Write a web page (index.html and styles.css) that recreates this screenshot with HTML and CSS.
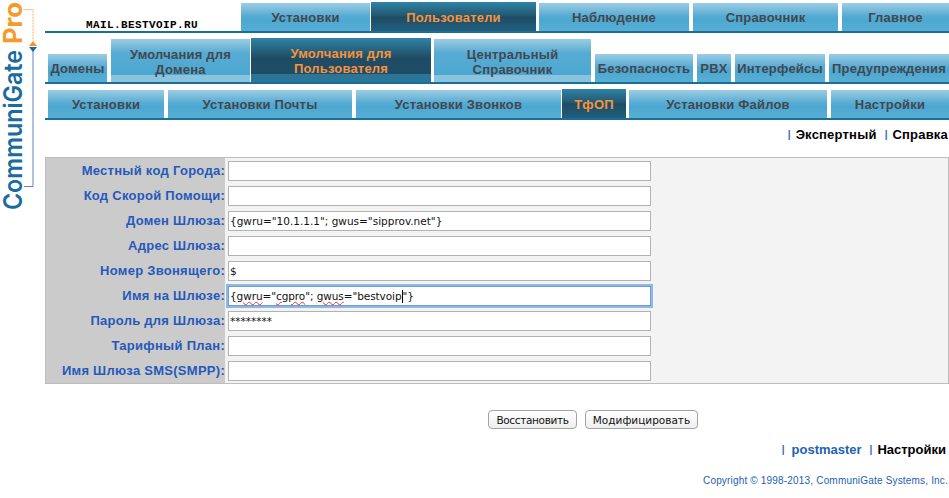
FILE: index.html
```html
<!DOCTYPE html>
<html lang="ru">
<head>
<meta charset="utf-8">
<title>CommuniGate Pro</title>
<link rel="stylesheet" href="styles.css">
</head>
<body>
<div class="page">
  <aside class="logo">
    <svg width="45" height="215" viewBox="0 0 45 215">
      <text class="logo-blue" transform="translate(22 210) rotate(-90)" textLength="160" lengthAdjust="spacingAndGlyphs">CommuniGate</text>
      <text class="logo-orange" transform="translate(22 44) rotate(-90)" textLength="42" lengthAdjust="spacingAndGlyphs">Pro</text>
      <path class="line-orange" d="M21 9.500H33V41"/>
      <path class="line-blue" d="M33 50V186.500H24"/>
      <path class="tri-orange" d="M29 46L33 41L37 46Z"/>
      <path class="tri-blue" d="M29 47H37L33 52Z"/>
    </svg>
  </aside>
  <main class="content">
    <nav class="tabs row1">
      <div class="site">MAIL.BESTVOIP.RU</div>
      <a class="tab">Установки</a>
      <a class="tab active">Пользователи</a>
      <a class="tab">Наблюдение</a>
      <a class="tab">Справочник</a>
      <a class="tab">Главное</a>
    </nav>
    <nav class="tabs row2">
      <a class="tab">Домены</a>
      <a class="tab tall">Умолчания для<br>Домена</a>
      <a class="tab tall active">Умолчания для<br>Пользователя</a>
      <a class="tab tall">Центральный<br>Справочник</a>
      <a class="tab">Безопасность</a>
      <a class="tab">PBX</a>
      <a class="tab">Интерфейсы</a>
      <a class="tab">Предупреждения</a>
    </nav>
    <nav class="tabs row3">
      <a class="tab">Установки</a>
      <a class="tab">Установки Почты</a>
      <a class="tab">Установки Звонков</a>
      <a class="tab active">ТфОП</a>
      <a class="tab">Установки Файлов</a>
      <a class="tab">Настройки</a>
    </nav>
    <div class="links top-links">
      <span class="sep">|</span><a class="link-black">Экспертный</a>
      <span class="sep">|</span><a class="link-black">Справка</a>
    </div>
    <form class="panel">
      <label class="label">Местный код Города:</label><div class="field"><input class="input" type="text"></div>
      <label class="label">Код Скорой Помощи:</label><div class="field"><input class="input" type="text"></div>
      <label class="label">Домен Шлюза:</label><div class="field"><input class="input" type="text" value='{gwru="10.1.1.1"; gwus="sipprov.net"}'></div>
      <label class="label">Адрес Шлюза:</label><div class="field"><input class="input" type="text"></div>
      <label class="label">Номер Звонящего:</label><div class="field"><input class="input" type="text" value="$"></div>
      <label class="label">Имя на Шлюзе:</label><div class="field"><div class="input focus">{<span class="typo">gwru</span>="<span class="typo">cgpro</span>"; <span class="typo">gwus</span>="bestvoip<span class="caret"></span>"}</div></div>
      <label class="label">Пароль для Шлюза:</label><div class="field"><input class="input" type="text" value="********"></div>
      <label class="label">Тарифный План:</label><div class="field"><input class="input" type="text"></div>
      <label class="label">Имя Шлюза SMS(SMPP):</label><div class="field"><input class="input" type="text"></div>
    </form>
    <div class="buttons">
      <button class="btn" type="button">Восстановить</button>
      <button class="btn" type="button">Модифицировать</button>
    </div>
    <div class="links bottom-links">
      <span class="sep first">|</span><a class="link-blue">postmaster</a>
      <span class="sep">|</span><a class="link-black">Настройки</a>
    </div>
    <div class="copyright">Copyright © 1998-2013, CommuniGate Systems, Inc.</div>
  </main>
</div>
</body>
</html>
```
FILE: styles.css
```css
html, body {
  margin: 0;
  padding: 0;
  background: #fff;
}
body {
  font-family: "Liberation Sans", Arial, sans-serif;
  font-size: 13px;
  overflow: hidden;
}
.page {
  display: flex;
  width: 949px;
  height: 498px;
}
.logo {
  flex: 0 0 45px;
}
.logo svg {
  display: block;
}
.logo text {
  font-family: Inter, "Liberation Sans", sans-serif;
  font-size: 25px;
}
.logo-blue {
  fill: #1a6b9e;
  font-weight: 600;
}
.logo-orange {
  fill: #f59a2c;
  font-weight: 700;
}
.line-orange {
  fill: none;
  stroke: #f9ae63;
  stroke-width: 1;
  stroke-dasharray: 1 .5;
}
.line-blue {
  fill: none;
  stroke: #5f83c0;
  stroke-width: 1;
}
.tri-orange {
  fill: #f5962a;
}
.tri-blue {
  fill: #1c6a98;
}
.content {
  flex: 1;
  min-width: 0;
}
.tabs {
  display: grid;
  column-gap: 4px;
  align-items: end;
  box-sizing: border-box;
  border-bottom: 2px solid #1a6f96;
}
.row1 {
  height: 33px;
  grid-template-columns: 192px 129px 161px 150px 145px 107px;
}
.row2 {
  height: 51px;
  padding-left: 3px;
  grid-template-columns: 59px 139px 176px 157px 98px 34px 90px 120px;
}
.row3 {
  height: 36px;
  padding-left: 3px;
  grid-template-columns: 116px 184px 205px 60px 198px 118px;
}
.tab {
  display: flex;
  align-items: center;
  justify-content: center;
  box-sizing: border-box;
  height: 28px;
  padding-top: 1px;
  text-align: center;
  font-weight: bold;
  font-size: 13px;
  line-height: 15px;
  letter-spacing: .2px;
  white-space: nowrap;
  color: #43474e;
  background: linear-gradient(#9ccde4 0, #57abd3 13px, #4ca8d1 17px, #58aed5 28px);
}
.tab.tall {
  height: 43px;
  padding-top: 2px;
  background: linear-gradient(#9ccde4 0, #57abd3 14px, #4ca8d1 36px, #8ac3de 36px, #8ac3de 43px);
}
.tab.active {
  height: 29px;
  margin: 0 -1px 0 -3px;
  color: #f8923b;
  background: linear-gradient(#2f83a6 0, #22566f 14px, #1d4c64 15px, #215f7e 29px);
}
.tab.tall.active {
  height: 44px;
  background: linear-gradient(#2f83a6 0, #1f4c64 20px, #1e4d66 36px, #2b7698 36px, #2b7698 44px);
}
.site {
  margin-bottom: -1px;
  padding-right: 39px;
  text-align: right;
  font-family: "Liberation Mono", monospace;
  font-weight: bold;
  font-size: 11px;
  line-height: 14px;
  letter-spacing: .4px;
  color: #000;
}
.links {
  display: flex;
  justify-content: flex-end;
  align-items: center;
  font-weight: bold;
  font-size: 13px;
  line-height: 15px;
}
.top-links {
  height: 15px;
  margin-top: 7px;
  padding-right: 1px;
  letter-spacing: .2px;
}
.sep {
  color: #2a6cc0;
  font-weight: bold;
  font-size: 10px;
  letter-spacing: 0;
  margin-left: 8px;
  margin-right: 5px;
}
.sep.first {
  margin-right: 7px;
}
.link-black {
  color: #000;
}
.link-blue {
  color: #2362b6;
}
.panel {
  display: grid;
  grid-template-columns: 179px 1fr;
  grid-auto-rows: 25px;
  box-sizing: border-box;
  width: 904px;
  height: 227px;
  margin-top: 15px;
  border: 1px solid #bdbdbd;
  background: #f3f3f3;
}
.label {
  padding-top: 5px;
  box-sizing: border-box;
  background: #cbcbcb;
  text-align: right;
  font-weight: bold;
  font-size: 13px;
  line-height: 15px;
  letter-spacing: .27px;
  color: #2659bb;
}
.field {
  padding: 3px 0 0 3px;
}
.input {
  display: block;
  box-sizing: border-box;
  width: 423px;
  height: 20px;
  margin: 0;
  padding: 0 1px;
  border: 1px solid #b2b2b2;
  border-radius: 0;
  outline: none;
  background: #fff;
  font-family: "DejaVu Sans", sans-serif;
  font-size: 10.500px;
  line-height: 18px;
  color: #111;
}
.input.focus {
  border-color: #6d9fd0;
  box-shadow: 0 0 0 2px #8fb8e4;
  white-space: nowrap;
  letter-spacing: -.08px;
}
.typo {
  text-decoration: underline wavy #e0352b 1px;
  text-underline-offset: 1px;
}
.caret {
  display: inline-block;
  width: 1px;
  height: 13px;
  vertical-align: -3px;
  background: #000;
}
.buttons {
  display: flex;
  gap: 8px;
  margin-top: 26px;
  padding-left: 443px;
}
.btn {
  box-sizing: border-box;
  height: 19px;
  padding: 0;
  border: 1px solid #a3a3a3;
  border-radius: 4px;
  background: linear-gradient(#fff, #efefef);
  font-family: "DejaVu Sans", sans-serif;
  font-size: 10.500px;
  color: #111;
}
.btn:first-child {
  width: 89px;
  letter-spacing: -.35px;
}
.btn:last-child {
  width: 113px;
}
.bottom-links {
  margin-top: 13px;
  padding-right: 3px;
}
.copyright {
  margin-top: 18px;
  padding-right: 1px;
  text-align: right;
  font-size: 10px;
  line-height: 12px;
  letter-spacing: .18px;
  color: #2361b4;
}
```
